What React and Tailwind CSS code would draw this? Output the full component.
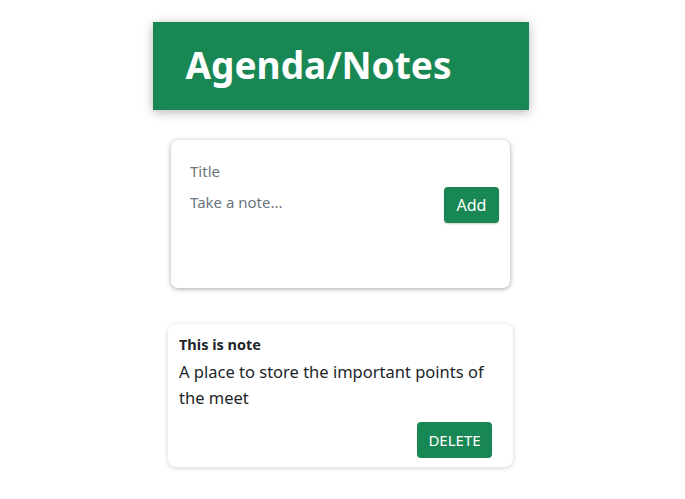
import React, { useState } from 'react'

export default function App() {
  const [title, setTitle] = useState('');
  const [content, setContent] = useState('');
  const [notes, setNotes] = useState([
    { title: 'This is note', content: 'A place to store the important points of the meet' },
  ]);

  function handleAdd(e) {
    e.preventDefault();
    if (!title && !content) return;
    setNotes([...notes, { title, content }]);
    setTitle('');
    setContent('');
  }

  function handleDelete(idx) {
    setNotes(notes.filter((_, i) => i !== idx));
  }

  return (
    <div className="min-h-screen bg-white pr-[4px] pt-[22px] flex flex-col items-center text-[#212529]" style={{ fontFamily: '"Noto Sans", "Open Sans", sans-serif' }}>
      <header className="w-[376px] h-[88px] bg-[#198754] flex items-center pl-[33px] shadow-[0_2px_10px_rgba(0,0,0,0.3)]">
        <h1 className="text-white text-[37px] font-bold leading-none pb-[4px]">Agenda/Notes</h1>
      </header>

      <form
        onSubmit={handleAdd}
        className="mt-[30px] w-[339px] h-[148px] bg-white rounded-[7px] shadow-[0_1px_5px_rgba(0,0,0,0.35)] flex pl-[19px] pr-[11px] pt-[19px]"
      >
        <div className="flex-1 flex flex-col">
          <input
            type="text"
            placeholder="Title"
            value={title}
            onChange={(e) => setTitle(e.target.value)}
            className="h-[24px] text-[15px] outline-none placeholder:text-[#6c757d]"
          />
          <textarea
            placeholder="Take a note..."
            value={content}
            onChange={(e) => setContent(e.target.value)}
            className="mt-[8px] h-[60px] text-[15px] leading-[22px] outline-none resize-none placeholder:text-[#6c757d]"
          />
        </div>
        <button
          type="submit"
          className="mt-[28px] self-start w-[55px] h-[36px] bg-[#198754] text-white text-[16px] rounded-[4px] shadow-[0_1px_2px_rgba(0,0,0,0.2)]"
        >
          Add
        </button>
      </form>

      <div className="mt-[36px] flex flex-col gap-4">
        {notes.map((note, idx) => (
          <div key={idx} className="w-[345px] bg-white rounded-[8px] shadow-[0_1px_5px_rgba(0,0,0,0.18)] pl-[11px] pr-[21px] pt-[9px] pb-[9px]">
            <h2 className="text-[14.5px] font-bold leading-[22px]">{note.title}</h2>
            <p className="mt-[4px] text-[16.5px] leading-[26px]">{note.content}</p>
            <div className="flex justify-end mt-[11px]">
              <button
                onClick={() => handleDelete(idx)}
                className="w-[75px] h-[36px] bg-[#198754] text-white text-[15px] rounded-[4px]"
              >
                DELETE
              </button>
            </div>
          </div>
        ))}
      </div>
    </div>
  );
}
